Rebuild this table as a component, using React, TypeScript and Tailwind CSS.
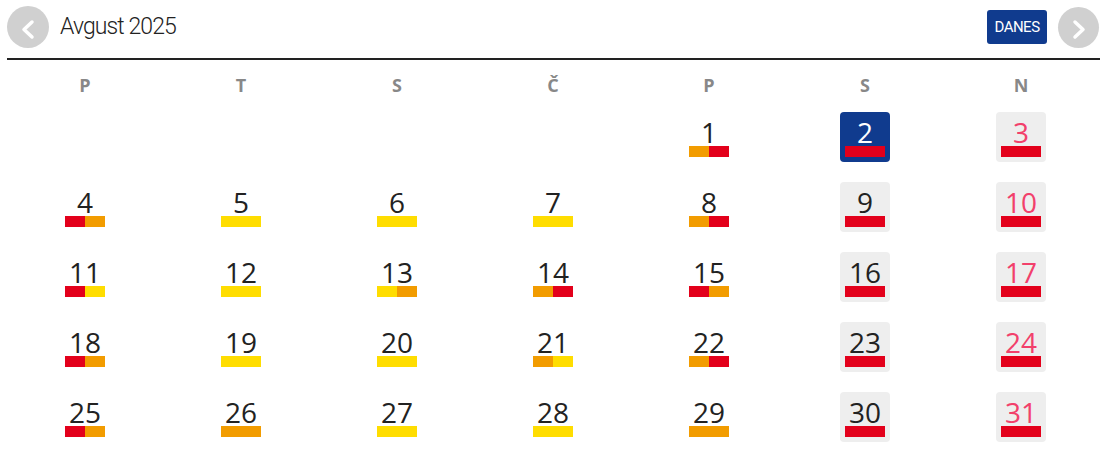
import React from 'react';

type Bar = 'r' | 'o' | 'y';

const barColor: Record<Bar, string> = {
  r: 'bg-[#e3001b]',
  o: 'bg-[#f29c00]',
  y: 'bg-[#ffdd00]',
};

// day -> bar halves
const days: Record<number, Bar[]> = {
  1: ['o', 'r'], 2: ['r'], 3: ['r'],
  4: ['r', 'o'], 5: ['y'], 6: ['y'], 7: ['y'], 8: ['o', 'r'], 9: ['r'], 10: ['r'],
  11: ['r', 'y'], 12: ['y'], 13: ['y', 'o'], 14: ['o', 'r'], 15: ['r', 'o'], 16: ['r'], 17: ['r'],
  18: ['r', 'o'], 19: ['y'], 20: ['y'], 21: ['o', 'y'], 22: ['o', 'r'], 23: ['r'], 24: ['r'],
  25: ['r', 'o'], 26: ['o'], 27: ['y'], 28: ['y'], 29: ['o'], 30: ['r'], 31: ['r'],
};

const weekdays = ['P', 'T', 'S', 'Č', 'P', 'S', 'N'];
const offset = 4; // August 1st 2025 is a Friday
const today = 2;

const Chevron = ({ dir }: { dir: 'left' | 'right' }) => (
  <svg width="41" height="41" viewBox="0 0 41 41">
    <polyline
      points={dir === 'left' ? '24,15 16,22.5 24,30' : '17,15 25,22.5 17,30'}
      fill="none"
      stroke="white"
      strokeWidth="3.5"
      strokeLinecap="round"
      strokeLinejoin="round"
    />
  </svg>
);

const DayCell = ({ day, col }: { day: number; col: number }) => {
  const weekend = col >= 5;
  const sunday = col === 6;
  const selected = day === today;
  const bars = days[day];

  let box = '';
  if (selected) box = 'bg-[#103b8e] rounded';
  else if (weekend) box = 'bg-[#eeeeee] rounded';

  let text = 'text-[#222]';
  if (selected) text = 'text-white';
  else if (sunday) text = 'text-[#f2406b]';

  return (
    <div className="flex justify-center">
      <div className={`w-[50px] h-[50px] flex flex-col items-center pt-[6px] ${box}`}>
        <span className={`text-[28px] leading-none font-['Open_Sans',sans-serif] ${text}`}>{day}</span>
        <div className="flex w-[40px] h-[11px]">
          {bars.map((b, i) => (
            <div key={i} className={`flex-1 ${barColor[b]}`} />
          ))}
        </div>
      </div>
    </div>
  );
};

export default function App() {
  const cells: (number | null)[] = [];
  for (let i = 0; i < offset; i++) cells.push(null);
  for (let d = 1; d <= 31; d++) cells.push(d);

  return (
    <div className="w-[1103px] h-[462px] bg-white pl-[7px] pr-[4px] pt-[6px] font-['Open_Sans',sans-serif]">
      {/* header */}
      <div className="flex items-center h-[42px]">
        <button className="w-[42px] h-[42px] rounded-full bg-[#d0d0d0] flex items-center justify-center">
          <Chevron dir="left" />
        </button>
        <h1 className="ml-[11px] text-[23px] font-light tracking-[-0.9px] text-[#222] font-['Roboto',sans-serif]">
          Avgust 2025
        </h1>
        <div className="ml-auto flex items-center gap-[11px]">
          <button className="w-[60px] h-[34px] rounded-[3px] bg-[#103b8e] text-white text-[15px] tracking-[-0.5px] font-['Roboto',sans-serif]">
            DANES
          </button>
          <button className="w-[41px] h-[41px] rounded-full bg-[#d0d0d0] flex items-center justify-center">
            <Chevron dir="right" />
          </button>
        </div>
      </div>

      <div className="mt-[10px] h-[2px] bg-[#222] mr-[-1px]" />

      {/* weekday names */}
      <div className="grid grid-cols-7 mt-[13px] h-[24px]">
        {weekdays.map((w, i) => (
          <div key={i} className="text-center text-[18px] leading-[24px] font-bold text-[#888]">
            {w}
          </div>
        ))}
      </div>

      {/* days */}
      <div className="grid grid-cols-7 mt-[15px] gap-y-[20px]">
        {cells.map((d, i) =>
          d === null ? <div key={i} /> : <DayCell key={i} day={d} col={i % 7} />
        )}
      </div>
    </div>
  );
}
